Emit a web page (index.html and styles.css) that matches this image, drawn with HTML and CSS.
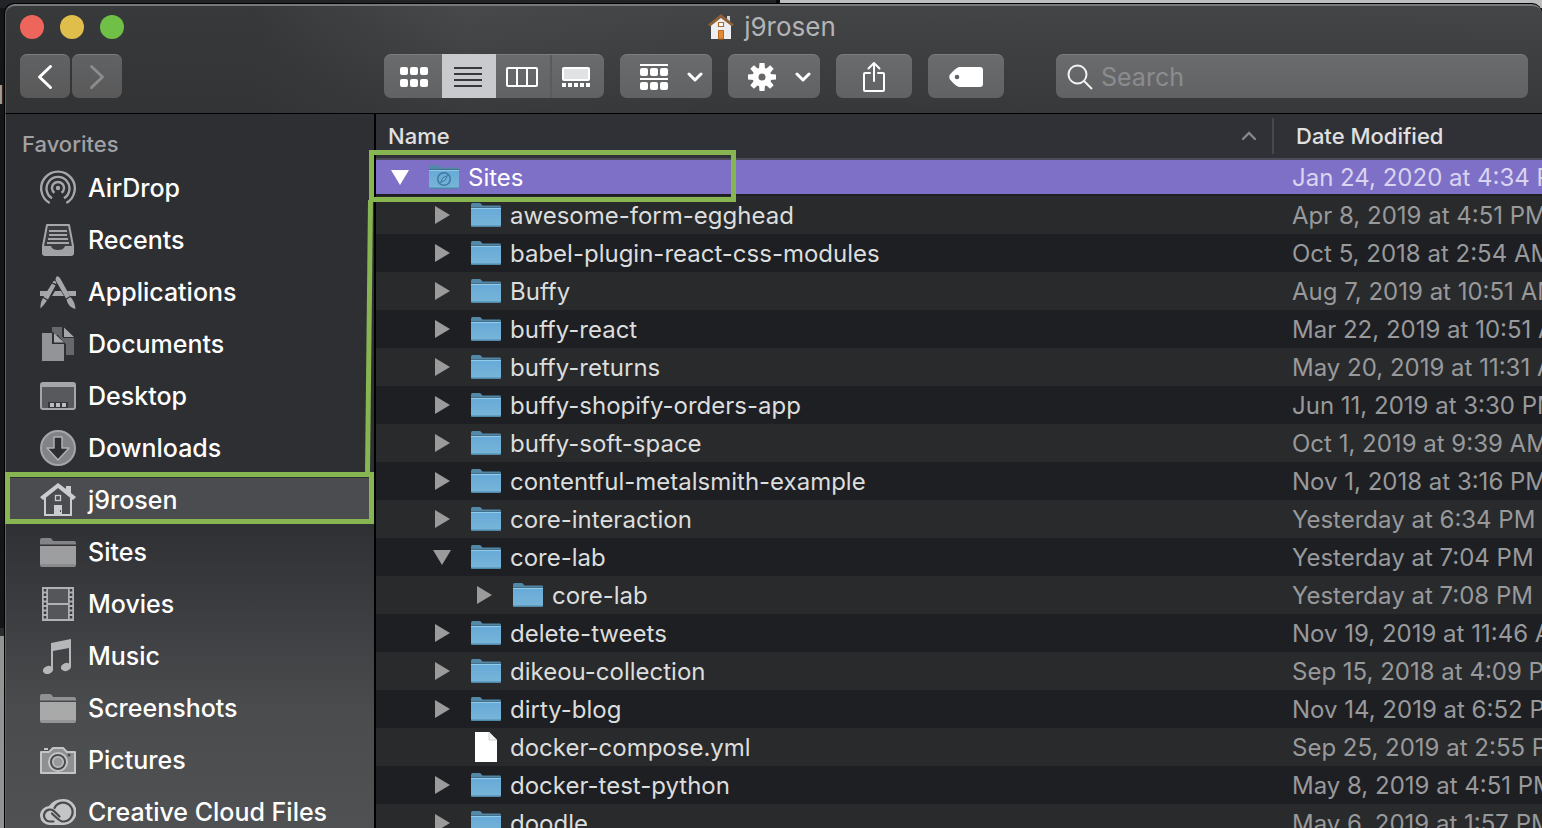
FILE: index.html
```html
<!DOCTYPE html>
<html lang="en">
<head>
<meta charset="utf-8">
<title>j9rosen</title>
<link rel="stylesheet" href="styles.css">
</head>
<body>
<svg class="defs" aria-hidden="true">
  <defs>
    <linearGradient id="blue" x1="0" y1="0" x2="0" y2="1">
      <stop offset="0" stop-color="#67aad8"/><stop offset="1" stop-color="#78b5d8"/>
    </linearGradient>
    <symbol id="folder" viewBox="0 0 30 24">
      <path d="M0 2Q0 0 1.500 0H8.500Q10 0 11 2L11.500 2.500H29Q30 2.500 30 4V8H0Z" fill="#5288a8"/>
      <path d="M0 4H30V5H0Z" fill="#456f88"/>
      <path d="M0 5H30V22Q30 24 28.500 24H1.500Q0 24 0 22Z" fill="url(#blue)"/>
      <path d="M0 5H30V6H0Z" fill="#93cbea"/>
      <path d="M0 22.500H30Q29.500 24 28.500 24H1.500Q.5 24 0 22.500Z" fill="#4f88ab"/>
    </symbol>
    <symbol id="right" viewBox="0 0 18 18"><path d="M2 0L17 9L2 18Z" fill="currentColor"/></symbol>
    <symbol id="down" viewBox="0 0 18 18"><path d="M0 2H18L9 17Z" fill="currentColor"/></symbol>
    <symbol id="grayfolder" viewBox="0 0 36 36">
      <path d="M0 6Q0 4 2 4H10Q11.500 4 12.500 6L13 7H34Q36 7 36 9V10.500H0Z" fill="#fff" opacity=".4"/>
      <path d="M0 12H36V31Q36 33 34 33H2Q0 33 0 31Z" fill="#fff" opacity=".52"/>
      <path d="M0 30H36V31Q36 33 34 33H2Q0 33 0 31Z" fill="#000" opacity=".12"/>
    </symbol>
    <symbol id="chev" viewBox="0 0 16 10"><path d="M2 2L8 8L14 2" fill="none" stroke="currentColor" stroke-width="3" stroke-linecap="round" stroke-linejoin="round"/></symbol>
  </defs>
</svg>
<div class="behind" aria-hidden="true">q</div>
<main class="window">
  <header class="toolbar">
    <div class="titlebar">
      <div class="lights">
        <button class="light red" aria-label="Close"></button>
        <button class="light yellow" aria-label="Minimize"></button>
        <button class="light green" aria-label="Zoom"></button>
      </div>
      <h1 class="title">
        <svg width="26" height="26" viewBox="0 0 26 26" aria-hidden="true">
          <path d="M19 2H22V9H19Z" fill="#d4d6d9"/>
          <path d="M3 11L13 2L23 11V25H3Z" fill="#eceef1"/>
          <path d="M0 10.500L13 0L26 10.500L24 12.500L13 4L2 12.500Z" fill="#8c6138"/>
          <path d="M10.500 8.500H15.500V12.500H10.500Z" fill="#fff" stroke="#b1682b" stroke-width="1.200"/>
          <path d="M10.500 16.500H15.500V25H10.500Z" fill="#e08a35" stroke="#b7651f"/>
        </svg>
        j9rosen
      </h1>
    </div>
    <div class="controls">
      <nav class="nav">
        <button class="btn nav-btn" aria-label="Back"><svg width="16" height="26" viewBox="0 0 16 26"><path d="M13.500 2.500L2.500 13L13.500 23.500" fill="none" stroke="#fff" stroke-width="3" stroke-linecap="round" stroke-linejoin="round"/></svg></button>
        <button class="btn nav-btn" aria-label="Forward"><svg width="16" height="26" viewBox="0 0 16 26"><path d="M2.500 2.500L13.500 13L2.500 23.500" fill="none" stroke="#8b8c8d" stroke-width="3" stroke-linecap="round" stroke-linejoin="round"/></svg></button>
      </nav>
      <div class="views">
        <button class="seg first" aria-label="Icons"><svg width="28" height="20" viewBox="0 0 28 20" fill="#fff"><rect width="8" height="8" rx="2"/><rect x="10" width="8" height="8" rx="2"/><rect x="20" width="8" height="8" rx="2"/><rect y="12" width="8" height="8" rx="2"/><rect x="10" y="12" width="8" height="8" rx="2"/><rect x="20" y="12" width="8" height="8" rx="2"/></svg></button>
        <button class="seg on" aria-label="List"><svg width="28" height="20" viewBox="0 0 28 20" fill="#38393b"><path d="M0 0H28V2H0ZM0 6H28V8H0ZM0 12H28V14H0ZM0 18H28V20H0Z"/></svg></button>
        <button class="seg" aria-label="Columns"><svg width="32" height="20" viewBox="0 0 32 20" fill="none" stroke="#fff" stroke-width="2"><rect x="1" y="1" width="30" height="18" rx="1"/><path d="M11 1V19M21 1V19"/></svg></button>
        <button class="seg last" aria-label="Gallery"><svg width="28" height="20" viewBox="0 0 28 20" fill="#fff"><rect x="1" y="1" width="26" height="12" rx="1" fill="#e1e2e4" stroke="#fff" stroke-width="2"/><path d="M0 16H4V20H0ZM6 16H10V20H6ZM12 16H16V20H12ZM18 16H22V20H18ZM24 16H28V20H24Z"/></svg></button>
      </div>
      <button class="btn menu" aria-label="Group">
        <svg width="28" height="26" viewBox="0 0 28 26" fill="#fff"><path d="M0 0H28V2H0ZM0 14H28V16H0Z"/><rect y="4" width="8" height="8" rx="2"/><rect x="10" y="4" width="8" height="8" rx="2"/><rect x="20" y="4" width="8" height="8" rx="2"/><rect y="18" width="8" height="8" rx="2"/><rect x="10" y="18" width="8" height="8" rx="2"/><rect x="20" y="18" width="8" height="8" rx="2"/></svg>
        <svg width="16" height="10"><use href="#chev"/></svg>
      </button>
      <button class="btn menu" aria-label="Actions">
        <svg width="28" height="28" viewBox="-14 -14 28 28" fill="#fff"><g id="teeth"><path d="M-3 -8L-2.500 -14H2.500L3 -8Z"/><path d="M-3 8L-2.500 14H2.500L3 8Z"/><path d="M-8 -3L-14 -2.500V2.500L-8 3Z"/><path d="M8 -3L14 -2.500V2.500L8 3Z"/></g><use href="#teeth" transform="rotate(45)"/><circle r="6.500" fill="none" stroke="#fff" stroke-width="6"/></svg>
        <svg width="16" height="10"><use href="#chev"/></svg>
      </button>
      <button class="btn wide" aria-label="Share"><svg width="24" height="32" viewBox="0 0 24 32" fill="none" stroke="#fff" stroke-width="2" stroke-linecap="round" stroke-linejoin="round"><path d="M8 12H3Q2 12 2 13V29Q2 30 3 30H21Q22 30 22 29V13Q22 12 21 12H16"/><path d="M12 20V2M6.500 7.500L12 2L17.500 7.500"/></svg></button>
      <button class="btn wide" aria-label="Tags"><svg width="34" height="20" viewBox="0 0 34 20"><path d="M10 0H31Q34 0 34 3V17Q34 20 31 20H10Q7 19.500 1 12.500Q-.5 10 1 7.500Q7 .5 10 0Z" fill="#fff"/><circle cx="8" cy="10" r="2.300" fill="#626365"/></svg></button>
      <label class="search">
        <svg width="26" height="26" viewBox="0 0 26 26" fill="none" stroke="#f4f4f4" stroke-width="2" aria-hidden="true"><circle cx="10.500" cy="10.500" r="9"/><path d="M17 17L25 25"/></svg>
        <input type="search" placeholder="Search" aria-label="Search">
      </label>
    </div>
  </header>
  <div class="content">
    <aside class="sidebar">
      <h2 class="heading">Favorites</h2>
      <ul class="places">
        <li><a class="place" href="#"><svg class="ico" viewBox="0 0 36 36" fill="none" stroke="#a5a6a9" stroke-width="2.400"><circle cx="18" cy="18" r="2.200" fill="#a5a6a9" stroke="none"/><path d="M14.500 22.800A6 6 0 1 1 21.500 22.800M12 28.200A11.500 11.500 0 1 1 24 28.200M9.700 33A16.800 16.800 0 1 1 26.300 33"/></svg>AirDrop</a></li>
        <li><a class="place" href="#"><svg class="ico" viewBox="0 0 36 36"><path d="M7 3H29L33 24V31Q33 33 31 33H5Q3 33 3 31V24Z" fill="#3c3d41" stroke="#a5a6a9" stroke-width="2" stroke-linejoin="round"/><path d="M9 8H27V10H9ZM9 12H27V14H9ZM8 16H28V18H8ZM7 20H29V22H7Z" fill="#a5a6a9"/><path d="M3 24H11Q12 28 18 28Q24 28 25 24H33V33H3Z" fill="#a0a1a4"/></svg>Recents</a></li>
        <li><a class="place" href="#"><svg class="ico" viewBox="0 0 36 36" fill="#a5a6a9"><path d="M0 17H9L6 22H0ZM15 17H21L24 22H12ZM27 17H36V22H30Z"/><path d="M16 3.500Q17.500 1 20 4L30 22L26 24.500L15.500 6ZM26.500 25.500L30.500 23Q35 28 35.500 35Q28 33 26.500 25.500Z"/><path d="M12 9.500L15.500 11.500L8 25.500L3.500 23ZM13 7.500Q15 5.500 16.500 9L16 10L12.500 8.500ZM3 24L7 26.500Q4 31 .5 34.500Q0 29 3 24Z"/></svg>Applications</a></li>
        <li><a class="place" href="#"><svg class="ico" viewBox="0 0 36 36"><path d="M12 1H22V11H34V29H26V19L18 9H12Z" fill="#67686b"/><path d="M23 1L35 12H23Z" fill="#2e2f33"/><path d="M24 1.500L34 11H24Z" fill="#a5a6a9"/><path d="M1 6H13L26 18V36H1Z" fill="#2e2f33"/><path d="M2 7H12V18H24V35H2Z" fill="#939497"/><path d="M14 7L24 16.500H14Z" fill="#a8a9ac"/></svg>Documents</a></li>
        <li><a class="place" href="#"><svg class="ico" viewBox="0 0 36 36"><rect x="1" y="5" width="34" height="26" rx="2" fill="#58595c" stroke="#a5a6a9" stroke-width="2"/><path d="M2 6H34V9H2Z" fill="#a5a6a9"/><path d="M8 24H28V30H8Z" fill="#35363a"/><path d="M10 25H14V29H10ZM16 25H20V29H16ZM22 25H26V29H22Z" fill="#bbbcbe"/></svg>Desktop</a></li>
        <li><a class="place" href="#"><svg class="ico" viewBox="0 0 36 36"><circle cx="18" cy="18" r="17" fill="#828386" stroke="#a5a6a9" stroke-width="2"/><path d="M14 7H22V18H29L18 30L7 18H14Z" fill="#2d2e32" stroke="#b0b1b3" stroke-width="1.500" stroke-linejoin="round"/></svg>Downloads</a></li>
        <li><a class="place current" href="#"><svg class="ico" viewBox="0 0 36 36"><path d="M5 16V33H31V16" fill="none" stroke="#cbccce" stroke-width="2"/><path d="M0 15L18 1L26 7V4H31V11L36 15L33 18L18 6L3 18Z" fill="#cbccce"/><rect x="15.500" y="13.500" width="5" height="5" fill="none" stroke="#cbccce" stroke-width="1.300"/><path d="M14 23H22V34H14Z" fill="#cbccce"/><path d="M20 28H21V30H20Z" fill="#4b4c50"/></svg>j9rosen</a></li>
        <li><a class="place" href="#"><svg class="ico"><use href="#grayfolder"/></svg>Sites</a></li>
        <li><a class="place" href="#"><svg class="ico" viewBox="0 0 36 36"><path d="M2 1H34V35H2Z" fill="#b0b1b3"/><path d="M8 3H28V17H8ZM8 19H28V33H8Z" fill="#55565a"/><path d="M5 3V34M31 3V34" stroke="#37383b" stroke-width="2.500" stroke-dasharray="2.500 2"/></svg>Movies</a></li>
        <li><a class="place" href="#"><svg class="ico" viewBox="0 0 36 36" fill="#b6b7b9"><path d="M11 5L31 1V28H29V10L13 13V31H11Z"/><ellipse cx="8" cy="32" rx="5.200" ry="4" transform="rotate(-18 8 32)"/><ellipse cx="26" cy="29" rx="5.200" ry="4" transform="rotate(-18 26 29)"/></svg>Music</a></li>
        <li><a class="place" href="#"><svg class="ico"><use href="#grayfolder"/></svg>Screenshots</a></li>
        <li><a class="place" href="#"><svg class="ico" viewBox="0 0 36 36"><path d="M1 10H9L13 6H23L27 10H35V31H1Z" fill="#8f9092" stroke="#c4c5c7" stroke-width="2" stroke-linejoin="round"/><path d="M4 6H8V8H4Z" fill="#c4c5c7"/><circle cx="18" cy="20" r="10" fill="#c4c5c7"/><circle cx="18" cy="20" r="7" fill="#c4c5c7" stroke="#4a4b4d" stroke-width="2"/><circle cx="18" cy="20" r="4.500" fill="#98999b"/><circle cx="29" cy="13" r="1.500" fill="#4a4b4d"/></svg>Pictures</a></li>
        <li><a class="place" href="#"><svg class="ico" viewBox="0 0 36 36"><path d="M10 31A9.500 9.500 0 0 1 9 12Q14 5 23 5A13 13 0 0 1 24 31Z" fill="#c4c5c7"/><path d="M24 27.500H22Q19 26.500 12 19.500M24 27.500A9.500 9.500 0 1 0 14.500 14M13.500 27.500H10A6 6 0 1 1 14.500 17.500L19.500 22.500" fill="none" stroke="#4a4b4d" stroke-width="2.200" stroke-linecap="round"/></svg>Creative Cloud Files</a></li>
      </ul>
    </aside>
    <section class="listing">
      <table class="files">
        <colgroup><col><col class="date-col"></colgroup>
        <thead>
          <tr>
            <th scope="col"><div class="head">Name<svg class="sort" width="16" height="10" viewBox="0 0 16 10" aria-hidden="true"><path d="M2 8L8 2L14 8" fill="none" stroke="#858689" stroke-width="2.400" stroke-linecap="round"/></svg></div></th>
            <th scope="col"><div class="head date-head">Date Modified</div></th>
          </tr>
        </thead>
        <tbody>
          <tr class="selected"><td><div class="name"><button class="tri" aria-label="Collapse"><svg><use href="#down"/></svg></button><svg class="file" viewBox="0 0 30 24"><use href="#folder"/><circle cx="15" cy="14" r="6.300" fill="none" stroke="#41789f" stroke-width="1.500"/><path d="M18.500 10.500L16.200 15.200L11.500 17.500L13.800 12.800Z" fill="none" stroke="#41789f"/></svg>Sites</div></td><td>Jan 24, 2020 at 4:34 PM</td></tr>
          <tr><td><div class="name in1"><button class="tri" aria-label="Expand"><svg><use href="#right"/></svg></button><svg class="file"><use href="#folder"/></svg>awesome-form-egghead</div></td><td>Apr 8, 2019 at 4:51 PM</td></tr>
          <tr><td><div class="name in1"><button class="tri" aria-label="Expand"><svg><use href="#right"/></svg></button><svg class="file"><use href="#folder"/></svg>babel-plugin-react-css-modules</div></td><td>Oct 5, 2018 at 2:54 AM</td></tr>
          <tr><td><div class="name in1"><button class="tri" aria-label="Expand"><svg><use href="#right"/></svg></button><svg class="file"><use href="#folder"/></svg>Buffy</div></td><td>Aug 7, 2019 at 10:51 AM</td></tr>
          <tr><td><div class="name in1"><button class="tri" aria-label="Expand"><svg><use href="#right"/></svg></button><svg class="file"><use href="#folder"/></svg>buffy-react</div></td><td>Mar 22, 2019 at 10:51 AM</td></tr>
          <tr><td><div class="name in1"><button class="tri" aria-label="Expand"><svg><use href="#right"/></svg></button><svg class="file"><use href="#folder"/></svg>buffy-returns</div></td><td>May 20, 2019 at 11:31 AM</td></tr>
          <tr><td><div class="name in1"><button class="tri" aria-label="Expand"><svg><use href="#right"/></svg></button><svg class="file"><use href="#folder"/></svg>buffy-shopify-orders-app</div></td><td>Jun 11, 2019 at 3:30 PM</td></tr>
          <tr><td><div class="name in1"><button class="tri" aria-label="Expand"><svg><use href="#right"/></svg></button><svg class="file"><use href="#folder"/></svg>buffy-soft-space</div></td><td>Oct 1, 2019 at 9:39 AM</td></tr>
          <tr><td><div class="name in1"><button class="tri" aria-label="Expand"><svg><use href="#right"/></svg></button><svg class="file"><use href="#folder"/></svg>contentful-metalsmith-example</div></td><td>Nov 1, 2018 at 3:16 PM</td></tr>
          <tr><td><div class="name in1"><button class="tri" aria-label="Expand"><svg><use href="#right"/></svg></button><svg class="file"><use href="#folder"/></svg>core-interaction</div></td><td>Yesterday at 6:34 PM</td></tr>
          <tr><td><div class="name in1"><button class="tri" aria-label="Collapse"><svg><use href="#down"/></svg></button><svg class="file"><use href="#folder"/></svg>core-lab</div></td><td>Yesterday at 7:04 PM</td></tr>
          <tr><td><div class="name in2"><button class="tri" aria-label="Expand"><svg><use href="#right"/></svg></button><svg class="file"><use href="#folder"/></svg>core-lab</div></td><td>Yesterday at 7:08 PM</td></tr>
          <tr><td><div class="name in1"><button class="tri" aria-label="Expand"><svg><use href="#right"/></svg></button><svg class="file"><use href="#folder"/></svg>delete-tweets</div></td><td>Nov 19, 2019 at 11:46 AM</td></tr>
          <tr><td><div class="name in1"><button class="tri" aria-label="Expand"><svg><use href="#right"/></svg></button><svg class="file"><use href="#folder"/></svg>dikeou-collection</div></td><td>Sep 15, 2018 at 4:09 PM</td></tr>
          <tr><td><div class="name in1"><button class="tri" aria-label="Expand"><svg><use href="#right"/></svg></button><svg class="file"><use href="#folder"/></svg>dirty-blog</div></td><td>Nov 14, 2019 at 6:52 PM</td></tr>
          <tr><td><div class="name in1"><span class="tri"></span><svg class="file doc" viewBox="0 0 30 30"><path d="M4 0H18L26 8V30H4Z" fill="#fff"/><path d="M18 0V8H26" fill="#f4f4f4" stroke="#cfcfcf"/></svg>docker-compose.yml</div></td><td>Sep 25, 2019 at 2:55 PM</td></tr>
          <tr><td><div class="name in1"><button class="tri" aria-label="Expand"><svg><use href="#right"/></svg></button><svg class="file"><use href="#folder"/></svg>docker-test-python</div></td><td>May 8, 2019 at 4:51 PM</td></tr>
          <tr><td><div class="name in1"><button class="tri" aria-label="Expand"><svg><use href="#right"/></svg></button><svg class="file"><use href="#folder"/></svg>doodle</div></td><td>May 6, 2019 at 1:57 PM</td></tr>
        </tbody>
      </table>
    </section>
  </div>
</main>
<svg class="callouts" width="740" height="528" viewBox="0 0 740 528" fill="none" stroke="#87b552" stroke-width="5" aria-hidden="true">
  <rect x="371.500" y="152.500" width="362" height="47"/>
  <path d="M370.500 200L367.500 474"/>
  <rect x="7.500" y="474.500" width="364" height="47"/>
</svg>
</body>
</html>
```

FILE: styles.css
```css
* { box-sizing: border-box; }

body {
  margin: 0;
  height: 100vh;
  overflow: hidden;
  padding: 3px 0 0 4px;
  font-family: Inter, "Liberation Sans", sans-serif;
  font-size: 24px;
  color: #fff;
  background:
    linear-gradient(90deg, #222326 0 776px, #0a0a0a 776px 780px, #bdbdbe 780px) top / 100% 8px no-repeat,
    linear-gradient(#151517 0 628px, #2c2c2e 628px 636px, #939393 636px);
}

h1, h2, ul { margin: 0; padding: 0; font-weight: 400; }
ul { list-style: none; }
a { color: inherit; text-decoration: none; }
svg { display: block; flex: none; }
button { font: inherit; color: inherit; border: 0; padding: 0; background: none; }

.defs { position: absolute; width: 0; height: 0; }

.behind {
  position: absolute;
  left: 0;
  top: 78px;
  width: 4px;
  overflow: hidden;
  direction: rtl;
  font-size: 26px;
  line-height: 26px;
  color: #a0a0a0;
}

.window {
  height: 100%;
  display: flex;
  flex-direction: column;
  overflow: hidden;
  border: 1px solid #000;
  border-width: 1px 0 0 1px;
  border-radius: 10px 10px 0 0;
  background: #2e2f33;
}

.toolbar {
  flex: none;
  padding: 0 14px 15px;
  border-top: 2px solid #77797a;
  border-left: 1px solid #5c5d5e;
  border-bottom: 1px solid #000;
  border-radius: 10px 10px 0 0;
  background:
    linear-gradient(#0000, #2f303199),
    linear-gradient(90deg, #38393a 0, #38393a 250px, #47494b 460px, #434446 700px, #434547);
}

.titlebar {
  height: 42px;
  display: grid;
  grid-template-columns: 1fr auto 1fr;
  align-items: center;
  padding-right: 4px;
}
.lights { display: flex; gap: 16px; }
.light { width: 24px; height: 24px; border-radius: 50%; }
.red { background: #ee655b; }
.yellow { background: #dfbe4c; }
.green { background: #70bf47; }
.title {
  display: flex;
  align-items: center;
  gap: 10px;
  font-size: 26px;
  line-height: 32px;
  color: #b3b4b5;
}

.controls { display: flex; gap: 16px; padding-top: 6px; }
.nav { display: flex; gap: 2px; margin-right: 246px; }
.btn, .seg, .search {
  height: 44px;
  background: linear-gradient(#6a6b6d, #616264);
  border-top: 1px solid #7c7d7f;
}
.btn, .search { border-radius: 7px; }
.btn, .seg { display: flex; align-items: center; justify-content: center; flex: none; }
.nav-btn { width: 50px; background: linear-gradient(#616263, #59595a); }
.menu { width: 92px; justify-content: space-between; padding: 0 9px 0 20px; }
.wide { width: 76px; }
.views { display: flex; flex: none; }
.seg { width: 54px; padding-right: 2px; }
.first { width: 58px; padding: 0 0 0 2px; border-radius: 7px 0 0 7px; }
.last { border-radius: 0 7px 7px 0; box-shadow: inset 2px 0 #5a5b5d; }
.on { background: #c8cacd; border-top-color: #c8cacd; }
.search {
  flex: 1;
  min-width: 0;
  margin-left: 36px;
  display: flex;
  align-items: center;
  gap: 8px;
  padding: 0 11px;
}
.search input {
  flex: 1;
  min-width: 0;
  border: 0;
  padding: 0;
  outline: 0;
  background: none;
  font: inherit;
  font-size: 25px;
  color: #fff;
}
.search input::placeholder { color: #8b8c8e; opacity: 1; }

.content { flex: 1; min-height: 0; display: flex; }
.sidebar {
  flex: none;
  width: 371px;
  overflow: hidden;
  border-left: 1px solid #5f6061;
  border-right: 2px solid #000;
  background: linear-gradient(#2e2f33 0, #2e2f33 400px, #4b4c4e 600px, #505153);
}
.heading {
  padding: 14px 16px 0;
  height: 48px;
  font-size: 22px;
  line-height: 32px;
  font-weight: 500;
  color: #a0a1a3;
}
.place {
  height: 52px;
  display: flex;
  align-items: center;
  gap: 12px;
  padding-left: 34px;
  font-size: 25px;
  font-weight: 500;
  white-space: nowrap;
}
.current { background: linear-gradient(#4b4c50, #4b4c50) center / 100% 44px no-repeat; }
.ico { width: 36px; height: 36px; }

.listing { flex: 1; min-width: 0; overflow: hidden; background: #1e1f23; }
.files {
  width: 100%;
  table-layout: fixed;
  border-collapse: separate;
  border-spacing: 0;
}
.date-col { width: 270px; }
.files th {
  height: 44px;
  padding: 4px 0;
  background: #303136;
  font-size: 22px;
  font-weight: 500;
  text-align: left;
  color: #e0e0e0;
}
.head { height: 36px; display: flex; align-items: center; justify-content: space-between; padding: 0 15px 0 12px; }
.date-head { border-left: 2px solid #47484c; padding-left: 22px; }
.files td { height: 38px; padding: 0; white-space: nowrap; overflow: hidden; }
.files td + td { padding-left: 20px; color: #98999b; }
.name { display: flex; align-items: center; color: #dcdddd; padding-left: 15px; height: 36px; }
.in1 { padding-left: 57px; }
.in2 { padding-left: 99px; }
.files tbody tr:nth-child(even) { background: #292a2b; }
.selected td { background: #7f70c7; border-top: 2px solid #4d4c59; border-bottom: 2px solid #1e1f23; }
.selected .name { color: #fff; height: 34px; }
.files .selected td + td { color: #d9d4ef; }
.tri { width: 18px; height: 18px; margin-right: 20px; color: #9b9b9b; }
.selected .tri { color: #fff; }
.tri svg { width: 18px; height: 18px; }
.file { width: 30px; height: 24px; margin-right: 9px; }
.doc { height: 30px; }

.callouts { position: absolute; left: 0; top: 0; pointer-events: none; }
```
